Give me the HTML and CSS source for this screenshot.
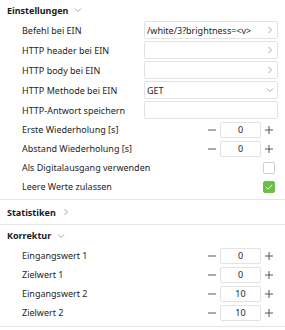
FILE: index.html
```html
<!DOCTYPE html>
<html lang="de">
<head>
    <meta charset="UTF-8">
    <meta name="viewport" content="width=device-width, initial-scale=1.0">
    <title>Einstellungen</title>
    <link rel="stylesheet" href="styles.css">
</head>
<body>
    <div class="panel">
        <section class="group first">
            <div class="group-head">
                <span>Einstellungen</span>
                <svg class="chev" width="8" height="8" viewBox="0 0 8 8"><path d="M1 2.5 L4 5.5 L7 2.5" /></svg>
            </div>
            <div class="row wide">
                <span class="label">Befehl bei EIN</span>
                <div class="field"><span class="value">/white/3?brightness=&lt;v&gt;</span><svg class="chev" width="8" height="8" viewBox="0 0 8 8"><path d="M2.5 1 L5.5 4 L2.5 7" /></svg></div>
            </div>
            <div class="row wide">
                <span class="label">HTTP header bei EIN</span>
                <div class="field"><span class="value"></span><svg class="chev" width="8" height="8" viewBox="0 0 8 8"><path d="M2.5 1 L5.5 4 L2.5 7" /></svg></div>
            </div>
            <div class="row wide">
                <span class="label">HTTP body bei EIN</span>
                <div class="field"><span class="value"></span><svg class="chev" width="8" height="8" viewBox="0 0 8 8"><path d="M2.5 1 L5.5 4 L2.5 7" /></svg></div>
            </div>
            <div class="row wide">
                <span class="label">HTTP Methode bei EIN</span>
                <div class="field"><span class="value">GET</span><svg class="chev" width="8" height="8" viewBox="0 0 8 8"><path d="M1 2.5 L4 5.5 L7 2.5" /></svg></div>
            </div>
            <div class="row wide">
                <span class="label">HTTP-Antwort speichern</span>
                <div class="field"><span class="value"></span></div>
            </div>
            <div class="row">
                <span class="label">Erste Wiederholung [s]</span>
                <div class="stepper">
                    <svg class="step" width="16" height="10" viewBox="0 0 16 10"><path d="M4 5 H12" /></svg>
                    <div class="num">0</div>
                    <svg class="step" width="16" height="10" viewBox="0 0 16 10"><path d="M4 5 H12 M8 1 V9" /></svg>
                </div>
            </div>
            <div class="row">
                <span class="label">Abstand Wiederholung [s]</span>
                <div class="stepper">
                    <svg class="step" width="16" height="10" viewBox="0 0 16 10"><path d="M4 5 H12" /></svg>
                    <div class="num">0</div>
                    <svg class="step" width="16" height="10" viewBox="0 0 16 10"><path d="M4 5 H12 M8 1 V9" /></svg>
                </div>
            </div>
            <div class="row">
                <span class="label">Als Digitalausgang verwenden</span>
                <div class="check"></div>
            </div>
            <div class="row">
                <span class="label">Leere Werte zulassen</span>
                <div class="check on"><svg width="12" height="12" viewBox="0 0 12 12"><path d="M3 6.2 L5.2 8.3 L9.2 3.8" /></svg></div>
            </div>
        </section>

        <section class="group closed">
            <div class="group-head">
                <span>Statistiken</span>
                <svg class="chev" width="8" height="8" viewBox="0 0 8 8"><path d="M2.5 1 L5.5 4 L2.5 7" /></svg>
            </div>
        </section>

        <section class="group">
            <div class="group-head">
                <span>Korrektur</span>
                <svg class="chev" width="8" height="8" viewBox="0 0 8 8"><path d="M1 2.5 L4 5.5 L7 2.5" /></svg>
            </div>
            <div class="row">
                <span class="label">Eingangswert 1</span>
                <div class="stepper">
                    <svg class="step" width="16" height="10" viewBox="0 0 16 10"><path d="M4 5 H12" /></svg>
                    <div class="num">0</div>
                    <svg class="step" width="16" height="10" viewBox="0 0 16 10"><path d="M4 5 H12 M8 1 V9" /></svg>
                </div>
            </div>
            <div class="row">
                <span class="label">Zielwert 1</span>
                <div class="stepper">
                    <svg class="step" width="16" height="10" viewBox="0 0 16 10"><path d="M4 5 H12" /></svg>
                    <div class="num">0</div>
                    <svg class="step" width="16" height="10" viewBox="0 0 16 10"><path d="M4 5 H12 M8 1 V9" /></svg>
                </div>
            </div>
            <div class="row">
                <span class="label">Eingangswert 2</span>
                <div class="stepper">
                    <svg class="step" width="16" height="10" viewBox="0 0 16 10"><path d="M4 5 H12" /></svg>
                    <div class="num">10</div>
                    <svg class="step" width="16" height="10" viewBox="0 0 16 10"><path d="M4 5 H12 M8 1 V9" /></svg>
                </div>
            </div>
            <div class="row">
                <span class="label">Zielwert 2</span>
                <div class="stepper">
                    <svg class="step" width="16" height="10" viewBox="0 0 16 10"><path d="M4 5 H12" /></svg>
                    <div class="num">10</div>
                    <svg class="step" width="16" height="10" viewBox="0 0 16 10"><path d="M4 5 H12 M8 1 V9" /></svg>
                </div>
            </div>
        </section>
    </div>
</body>
</html>
```

FILE: styles.css
```css
body {
    margin: 0;
    padding: 0;
    background: #ffffff;
    font-family: "Noto Sans", "Open Sans", sans-serif;
    font-size: 9px;
    color: #1e1e1e;
}
.panel {
    width: 285px;
}
.group {
    border-bottom: 1px solid #e6e6e6;
    padding-bottom: 4px;
}
.group.first {
    padding-bottom: 3px;
}
.group.closed {
    padding-bottom: 0;
}
.group-head {
    display: flex;
    align-items: center;
    gap: 6px;
    height: 21px;
    padding-left: 7px;
    font-weight: bold;
    color: #1a1a1a;
}
.group.first .group-head {
    height: 20px;
}
.group.closed .group-head {
    height: 24px;
}
.chev path {
    fill: none;
    stroke: #999;
    stroke-width: 0.9;
}
.row {
    display: flex;
    align-items: center;
    height: 19px;
    padding-left: 22px;
    padding-right: 8px;
}
.row.wide {
    height: 20px;
    padding-right: 7px;
}
.label {
    flex: 1;
    white-space: nowrap;
}
.field {
    width: 134px;
    height: 18px;
    box-sizing: border-box;
    border: 1px solid #e2e2e2;
    border-radius: 2px;
    display: flex;
    align-items: center;
    padding: 0 3px 0 2px;
}
.field .value {
    flex: 1;
    white-space: nowrap;
}
.stepper {
    display: flex;
    align-items: center;
}
.step path {
    fill: none;
    stroke: #444;
    stroke-width: 0.9;
}
.num {
    width: 41px;
    height: 16px;
    box-sizing: border-box;
    border: 1px solid #e2e2e2;
    border-radius: 2px;
    text-align: center;
    line-height: 14px;
}
.check {
    width: 12px;
    height: 12px;
    box-sizing: border-box;
    border: 1px solid #cfcfcf;
    border-radius: 2px;
    margin-right: 2px;
}
.check.on {
    background: #6cc04a;
    border-color: #6cc04a;
}
.check svg {
    display: block;
    margin: -1px;
}
.check path {
    fill: none;
    stroke: #e8f5e0;
    stroke-width: 1;
}
```
